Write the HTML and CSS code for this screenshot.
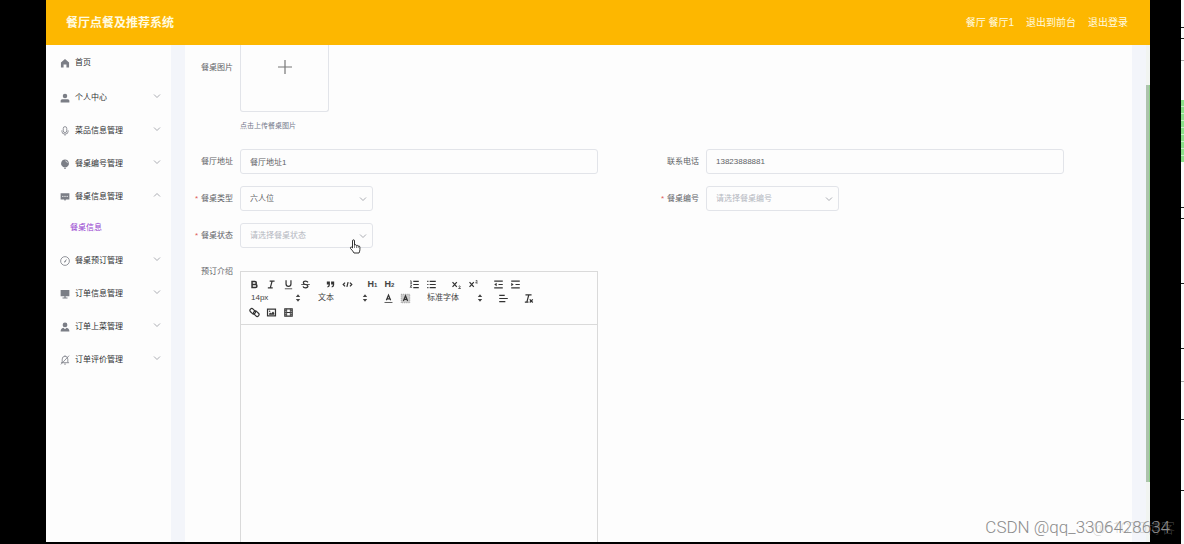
FILE: index.html
```html
<!DOCTYPE html>
<html lang="zh-CN">
<head>
<meta charset="utf-8">
<meta name="viewport" content="width=device-width, initial-scale=1">
<title>餐厅点餐及推荐系统</title>
<link rel="stylesheet" href="styles.css">
</head>
<body>
<svg class="defs" aria-hidden="true">
  <symbol id="down" viewBox="0 0 8 8"><path d="M1 2.5l3 3 3-3" fill="none" stroke="currentColor" stroke-width=".9"/></symbol>
  <symbol id="up" viewBox="0 0 8 8"><path d="M1 5.5l3-3 3 3" fill="none" stroke="currentColor" stroke-width=".9"/></symbol>
  <symbol id="sort" viewBox="0 0 6 10"><path d="M.8 4L3 1.3 5.2 4zM.8 6L3 8.7 5.2 6z" fill="currentColor"/></symbol>
</svg>
<div class="stage">
  <div class="app">
    <header class="topbar">
      <h1 class="brand">餐厅点餐及推荐系统</h1>
      <nav class="account">
        <span>餐厅 餐厅1</span>
        <a href="#">退出到前台</a>
        <a href="#">退出登录</a>
      </nav>
    </header>
    <div class="body">
      <nav class="sidebar">
        <a class="item home" href="#"><svg class="mi" viewBox="0 0 16 16"><path d="M8 1.5L1.5 7.2V15h4.2v-4.6h4.6V15h4.2V7.2z" fill="currentColor"/></svg><span>首页</span></a>
        <button class="item"><svg class="mi" viewBox="0 0 16 16"><circle cx="8" cy="4.6" r="3.6" fill="currentColor"/><path d="M1 15v-2.5Q1 10 3.5 10h9Q15 10 15 12.500V15z" fill="currentColor"/></svg><span>个人中心</span><svg class="arrow"><use href="#down"/></svg></button>
        <button class="item"><svg class="mi" viewBox="0 0 16 16"><g fill="none" stroke="currentColor" stroke-width="1.3"><rect x="5.200" y="1" width="5.600" height="9.500" rx="2.800"/><path d="M3 7v1.500a5 4.500 0 0 0 10 0V7M8 13v2.500"/></g></svg><span>菜品信息管理</span><svg class="arrow"><use href="#down"/></svg></button>
        <button class="item"><svg class="mi" viewBox="0 0 16 16"><path d="M8 .8a6.300 6.300 0 0 1 3 11.800L9.600 13.300h-3.200L5 12.600A6.300 6.300 0 0 1 8 .8zM6.500 14h3v1.600h-3z" fill="currentColor"/><path d="M8.500 3a4 4 0 0 1 3.500 3.500" fill="none" stroke="#fdfdfd"/></svg><span>餐桌编号管理</span><svg class="arrow"><use href="#down"/></svg></button>
        <button class="item" aria-expanded="true"><svg class="mi" viewBox="0 0 16 16"><path d="M1 2h14v10H9.500L8 14.500 6.500 12H1z" fill="currentColor"/><path d="M3.500 7h2M7 7h2M10.500 7h2" stroke="#fdfdfd" stroke-width="1.500"/></svg><span>餐桌信息管理</span><svg class="arrow"><use href="#up"/></svg></button>
        <a class="sub" href="#">餐桌信息</a>
        <button class="item"><svg class="mi" viewBox="0 0 16 16"><circle cx="8" cy="8" r="7" fill="none" stroke="currentColor" stroke-width="1.300"/><path d="M11.200 4.500L9 9.200l-1.800 1.600L6.500 9z" fill="currentColor"/></svg><span>餐桌预订管理</span><svg class="arrow"><use href="#down"/></svg></button>
        <button class="item"><svg class="mi" viewBox="0 0 16 16"><path d="M1 1.500h14v10H9V13.500h3V15H4v-1.500h3V11.500H1z" fill="currentColor"/></svg><span>订单信息管理</span><svg class="arrow"><use href="#down"/></svg></button>
        <button class="item"><svg class="mi" viewBox="0 0 16 16"><circle cx="8" cy="4.600" r="3.800" fill="currentColor"/><path d="M1 15q0-5 4.500-5.800L8 11.500l2.500-2.300Q15 10 15 15z" fill="currentColor"/></svg><span>订单上菜管理</span><svg class="arrow"><use href="#down"/></svg></button>
        <button class="item"><svg class="mi" viewBox="0 0 16 16"><path d="M3.500 12V6.500a4.500 4.500 0 0 1 9 0V12M1.500 12.300h13M6.500 14.500h3M8 2V.5M1.500 15L14.500 1" fill="none" stroke="currentColor" stroke-width="1.300"/></svg><span>订单评价管理</span><svg class="arrow"><use href="#down"/></svg></button>
      </nav>
      <main class="panel">
        <form class="form">
          <div class="field upload-row wide">
            <label for="photo">餐桌图片</label>
            <div class="control">
              <button type="button" id="photo" class="upload"><svg viewBox="0 0 14 14"><path d="M7 0v14M0 7h14" stroke="currentColor" stroke-width="1.200"/></svg></button>
              <p class="hint">点击上传餐桌图片</p>
            </div>
          </div>
          <div class="field">
            <label for="addr">餐厅地址</label>
            <div class="control"><input id="addr" class="box" type="text" value="餐厅地址1"></div>
          </div>
          <div class="field">
            <label for="tel">联系电话</label>
            <div class="control"><input id="tel" class="box" type="text" value="13823888881"></div>
          </div>
          <div class="field required">
            <label for="kind">餐桌类型</label>
            <div class="control"><div class="pick"><select id="kind" class="box"><option>六人位</option></select><svg class="arrow"><use href="#down"/></svg></div></div>
          </div>
          <div class="field required">
            <label for="code">餐桌编号</label>
            <div class="control"><div class="pick"><select id="code" class="box empty"><option>请选择餐桌编号</option></select><svg class="arrow"><use href="#down"/></svg></div></div>
          </div>
          <div class="field required wide">
            <label for="state">餐桌状态</label>
            <div class="control"><div class="pick"><select id="state" class="box empty"><option>请选择餐桌状态</option></select><svg class="arrow"><use href="#down"/></svg>
              <svg class="pointer" viewBox="0 0 12 15"><path d="M3.500 9V2q0-1.200 1-1.200T5.500 2v4q1.700-.9 2 .5 1.500-.6 1.700.6 1.700-.4 1.700 1V10.500Q10.900 12 10 14H5Q4 12 1.500 9.500 1 8 2.300 8z" fill="#fff" stroke="#333" stroke-width="1"/><path d="M5.500 9V6M7.500 9V6.500M9.200 9V7" stroke="#333" stroke-width=".6"/></svg>
            </div></div>
          </div>
          <div class="field editor-row">
            <label for="intro">预订介绍</label>
            <div class="control">
              <div class="editor">
                <div class="toolbar">
                  <div class="tools">
                    <div class="group">
                      <button type="button" aria-label="加粗"><svg class="q" viewBox="0 0 18 18"><path class="l b" d="M5 4h4.500a2.500 2.500 0 0 1 0 5H5zM5 9h5.500a2.500 2.500 0 0 1 0 5H5z"/></svg></button>
                      <button type="button" aria-label="斜体"><svg class="q" viewBox="0 0 18 18"><path class="l" d="M6 3.500h8M3 14.500h8M7 14.500l3-11"/></svg></button>
                      <button type="button" aria-label="下划线"><svg class="q" viewBox="0 0 18 18"><path class="l" d="M5 2v6a4 4 0 0 0 8 0V2"/><path class="l t" d="M3 16h12"/></svg></button>
                      <button type="button" aria-label="删除线"><svg class="q" viewBox="0 0 18 18"><path class="l t" d="M2 9h14"/><path class="l" d="M13 5.500Q12 3.500 9 3.500 5.500 3.500 5.500 6T9 9q4 .8 4 3T9 14.500Q5.500 14.500 5 12"/></svg></button>
                    </div>
                    <div class="group">
                      <button type="button" aria-label="引用"><svg class="q" viewBox="0 0 18 18"><path class="f" d="M3 4h5v6q0 4-4 4v-2q2 0 2-3H3zM10 4h5v6q0 4-4 4v-2q2 0 2-3h-3z"/></svg></button>
                      <button type="button" aria-label="代码"><svg class="q" viewBox="0 0 18 18"><path class="l" d="M5 6L2 9l3 3M13 6l3 3-3 3M10 5L8 13"/></svg></button>
                    </div>
                    <div class="group">
                      <button type="button" aria-label="一级标题" class="h">H<small>1</small></button>
                      <button type="button" aria-label="二级标题" class="h">H<small>2</small></button>
                    </div>
                    <div class="group">
                      <button type="button" aria-label="有序列表"><svg class="q" viewBox="0 0 18 18"><path class="l" d="M7 4h9M7 9h9M7 14h9"/><path class="l t" d="M2 3h1.500v4M2 7h3M2 10h2.500L2 13.500h3"/></svg></button>
                      <button type="button" aria-label="无序列表"><svg class="q" viewBox="0 0 18 18"><path class="l" d="M6 4h10M6 9h10M6 14h10M2 4h2M2 9h2M2 14h2"/></svg></button>
                    </div>
                    <div class="group">
                      <button type="button" aria-label="下标"><svg class="q" viewBox="0 0 18 18"><path class="l" d="M2.500 5l7 8M9.500 5l-7 8"/><path class="l t" d="M12.500 12q2.500-1.500 2.500 0t-2.500 3.500h3.500"/></svg></button>
                      <button type="button" aria-label="上标"><svg class="q" viewBox="0 0 18 18"><path class="l" d="M2.500 5l7 8M9.500 5l-7 8"/><path class="l t" d="M12.500 3q2.500-1.500 2.500 0t-2.500 3.500h3.500"/></svg></button>
                    </div>
                    <div class="group">
                      <button type="button" aria-label="减少缩进"><svg class="q" viewBox="0 0 18 18"><path class="l" d="M2 3.500h14M9 9h7M2 14.500h14"/><path class="f" d="M6 6v6L2 9z"/></svg></button>
                      <button type="button" aria-label="增加缩进"><svg class="q" viewBox="0 0 18 18"><path class="l" d="M2 3.500h14M9 9h7M2 14.500h14"/><path class="f" d="M2 6v6l4-3z"/></svg></button>
                    </div>
                  </div>
                  <div class="tools">
                    <div class="picker"><select aria-label="字号"><option>14px</option></select><svg><use href="#sort"/></svg></div>
                    <div class="picker"><select aria-label="段落"><option>文本</option></select><svg><use href="#sort"/></svg></div>
                    <div class="group">
                      <button type="button" aria-label="文字颜色"><svg class="q" viewBox="0 0 18 18"><path class="l" d="M5.500 12L9 3.500l3.500 8.500M6.500 9.500h5"/><path class="l t" d="M2.500 15.500h13"/></svg></button>
                      <button type="button" aria-label="背景颜色"><svg class="q" viewBox="0 0 18 18"><rect x="2" y="2" width="14" height="14" fill="#ccc" stroke="#777" stroke-dasharray="1.500"/><path class="l" d="M5.500 13L9 4.500l3.500 8.500M6.500 10.500h5"/></svg></button>
                    </div>
                    <div class="picker font"><select aria-label="字体"><option>标准字体</option></select><svg><use href="#sort"/></svg></div>
                    <div class="group"><button type="button" aria-label="对齐"><svg class="q" viewBox="0 0 18 18"><path class="l" d="M2 4h9M2 9h14M2 14h10"/></svg></button></div>
                    <div class="group"><button type="button" aria-label="清除格式"><svg class="q" viewBox="0 0 18 18"><path class="l" d="M4 3h10M9.500 3L6.500 14M3 15h6M11 10.500l5 5M16 10.500l-5 5"/></svg></button></div>
                  </div>
                  <div class="tools">
                    <div class="group">
                      <button type="button" aria-label="链接"><svg class="q" viewBox="0 0 18 18"><g class="l"><rect x="1" y="4" width="10" height="6" rx="3" transform="rotate(45 6 7)"/><rect x="7" y="8" width="10" height="6" rx="3" transform="rotate(45 12 11)"/></g></svg></button>
                      <button type="button" aria-label="图片"><svg class="q" viewBox="0 0 18 18"><rect class="l" x="2.500" y="3.500" width="13" height="11"/><circle class="f" cx="6" cy="7" r="1.200"/><path class="f" d="M5 12.500V11l2-2 1.500 1.500L11.500 7.500l2 2.500v2.500z"/></svg></button>
                      <button type="button" aria-label="视频"><svg class="q" viewBox="0 0 18 18"><path class="l" d="M3 3h12v12H3zM6 9h6"/><path class="l t" d="M6 3v12M12 3v12M3 6h3M3 9h3M3 12h3M12 6h3M12 9h3M12 12h3"/></svg></button>
                    </div>
                  </div>
                </div>
                <textarea id="intro"></textarea>
              </div>
            </div>
          </div>
        </form>
      </main>
      <div class="scroll"><div class="thumb"></div></div>
    </div>
  </div>
  <div class="edge">
    <i class="block"></i>
    <i class="tick" style="top:5%"></i><i class="tick" style="top:7%"></i><i class="tick faint" style="top:11%"></i>
    <i class="tick" style="top:38%"></i><i class="tick" style="top:40%"></i><i class="tick" style="top:52%"></i><i class="tick" style="top:64%"></i>
    <i class="tick faint" style="top:70%"></i><i class="tick" style="top:77%"></i><i class="tick" style="top:90%"></i>
  </div>
  <div class="mark back">@51CTO博客</div>
  <div class="mark">CSDN @qq_3306428634</div>
</div>
</body>
</html>
```
FILE: styles.css
```css
* { box-sizing: border-box; }
body {
  margin: 0;
  background: #000;
  color: #606266;
  font: 8px/12px "Liberation Sans", "Noto Sans CJK SC", sans-serif;
}
button, input, select, textarea { font: inherit; color: inherit; margin: 0; }
button { border: 0; padding: 0; background: none; cursor: pointer; }
a { color: inherit; text-decoration: none; }
.defs { display: none; }

.stage {
  position: relative;
  display: grid;
  grid-template-columns: minmax(0, 1fr) 3px;
  gap: 31px;
  height: 100vh;
  padding-left: 46px;
  overflow: hidden;
}
.app {
  display: flex;
  flex-direction: column;
  min-height: 0;
  margin-bottom: 2px;
  background: #f3f5fa;
}

.topbar {
  display: flex;
  flex: none;
  align-items: center;
  justify-content: space-between;
  height: 45px;
  padding: 0 22px 0 20px;
  background: #fdb700;
  color: #fffbe0;
}
.brand { margin: 0; font-size: 12px; line-height: 16px; font-weight: 700; }
.account { display: flex; gap: 12px; font-size: 10px; }

.body { display: flex; flex: 1; min-height: 0; }
.sidebar {
  display: flex;
  flex: none;
  flex-direction: column;
  width: 125px;
  background: #fdfdfd;
  color: #303133;
}
.item {
  display: flex;
  flex: none;
  align-items: center;
  gap: 5px;
  height: 33px;
  padding: 0 10px 0 14px;
  text-align: left;
}
.home { height: 36px; }
.item span { flex: 1; }
.mi { width: 10px; height: 10px; color: #7b7e86; }
.arrow { width: 8px; height: 8px; color: #a0a3a9; }
.item .arrow { margin-bottom: 4px; }
.sub { flex: none; padding: 9px 24px 10px; color: #9440cf; }

.panel { flex: 1; min-width: 0; margin: 0 14px; background: #fdfdfd; overflow: hidden; }
.form {
  display: grid;
  grid-template-columns: 1fr 1fr;
  grid-template-rows: auto 25px 25px 25px 1fr;
  row-gap: 12px;
  height: 100%;
  padding-right: 15px;
}
.field { display: flex; gap: 7px; min-width: 0; align-items: center; }
.field > label { flex: none; width: 48px; text-align: right; }
.required > label::before { content: "*"; margin-right: 3px; color: #e05a5a; }
.control { flex: 1; min-width: 0; margin-right: 53px; }
.wide { grid-column: 1 / -1; }
.upload-row { align-items: flex-start; }
.upload-row > label { padding-top: 17px; }
.upload {
  display: grid;
  place-items: center;
  width: 89px;
  height: 67px;
  padding-bottom: 23px;
  border: 1px solid #e2e4e9;
  border-top: 0;
  border-radius: 0 0 3px 3px;
  color: #777;
}
.upload svg { width: 14px; height: 14px; }
.hint { margin: 8px 0 5px; font-size: 7px; color: #74798a; }
.box {
  display: block;
  width: 100%;
  height: 25px;
  padding: 0 9px;
  border: 1px solid #e2e4e9;
  border-radius: 3px;
  background: #fdfdfd;
  appearance: none;
}
.empty { color: #b4b7bf; }
.pick { position: relative; width: 133px; }
.pick .arrow { position: absolute; right: 6px; top: 9px; pointer-events: none; }
.pointer { position: absolute; right: 12px; top: 16px; width: 12px; height: 15px; }

.editor-row { align-items: stretch; min-height: 0; padding-top: 11px; }
.editor-row .control { display: flex; }
.editor-row > label { margin-top: -5px; }
.editor {
  display: flex;
  flex: 1;
  flex-direction: column;
  min-width: 0;
  border: 1px solid #dadada;
  border-bottom: 0;
}
.toolbar { padding: 5px; border-bottom: 1px solid #dadada; color: #444; }
.tools { display: flex; gap: 8px; height: 14px; }
.group { display: flex; }
.group button { display: grid; place-items: center; width: 17px; height: 14px; }
.q { width: 11px; height: 11px; }
.l { fill: none; stroke: #333; stroke-width: 2; }
.b { stroke-width: 2.5; }
.t { stroke-width: 1.3; }
.f { fill: #333; }
.group .h { display: block; font-size: 9px; line-height: 14px; font-weight: 700; }
.h small { font-size: 6px; }
.picker { position: relative; width: 59px; }
.font { width: 65px; }
.picker select {
  display: block;
  width: 100%;
  height: 14px;
  padding: 0 0 0 5px;
  border: 0;
  background: none;
  appearance: none;
}
.picker svg { position: absolute; right: 4px; top: 2px; width: 6px; height: 10px; pointer-events: none; }
textarea {
  flex: 1;
  width: 100%;
  padding: 8px;
  border: 0;
  background: none;
  resize: none;
}

.scroll { width: 4px; padding-top: 40px; background: #f1f4f1; }
.thumb { height: 88%; max-height: 397px; background: #adc3ad; border-right: 1px solid #8fd08a; }

.edge { position: relative; background: #fafafa; }
.block {
  position: absolute;
  inset: 100px 0 auto;
  height: 62px;
  background: repeating-linear-gradient(#8be08b 0 6px, #c8f2c8 6px 7px);
}
.tick { position: absolute; left: 0; width: 3px; height: 1px; background: #222; }
.faint { background: #aaa; }
.mark {
  position: absolute;
  right: 14px;
  bottom: 6px;
  font: 300 17px/22px Roboto, "Noto Sans CJK SC", sans-serif;
  color: #8c8c8c;
  white-space: nowrap;
  pointer-events: none;
}
.back { right: 9px; bottom: 5px; font-size: 14px; color: #9996; }
```
